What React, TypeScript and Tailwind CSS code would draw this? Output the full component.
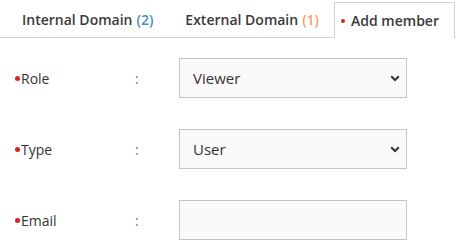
const rows = [
  { label: "Role", kind: "select", value: "Viewer" },
  { label: "Type", kind: "select", value: "User" },
  { label: "Email", kind: "input", value: "" },
];

const Chevron = () => (
  <svg width="10" height="7" viewBox="0 0 10 7" className="text-[#333]">
    <path d="M1.2 1.3 5 5 8.8 1.3" fill="none" stroke="currentColor" strokeWidth="2" />
  </svg>
);

export default function App() {
  return (
    <div className="w-[456px] h-[241px] bg-white overflow-hidden font-['Open_Sans',sans-serif] text-[#333]">
      <div className="flex items-end h-[38px] border-b border-[#d4d4d4] pl-[22px]">
        <div className="h-[36px] flex items-center text-[14px] font-semibold text-[#3a3a3a]">
          Internal Domain <span className="text-[#4a8cc4] ml-1">(2)</span>
        </div>
        <div className="h-[36px] flex items-center text-[14px] font-semibold text-[#3a3a3a] ml-[32px]">
          External Domain <span className="text-[#f59d6b] ml-1">(1)</span>
        </div>
        <div className="h-[36px] ml-[15px] -mb-px flex items-center gap-[6px] border border-b-0 border-[#d4d4d4] bg-white px-[6px] w-[121px] text-[14px] font-semibold text-[#3a3a3a]">
          <span className="w-[4px] h-[4px] rounded-full bg-[#e02020]" />
          Add member
        </div>
      </div>
      <div className="pt-[20px]">
        {rows.map((r, i) => (
          <div key={r.label} className={`flex items-center ${i > 0 ? "mt-[31px]" : ""}`}>
            <div className="w-[135px] pl-[15px] flex items-center text-[14px]">
              <span className="w-[5px] h-[5px] rounded-full bg-[#e02020] mr-px" />
              {r.label}
            </div>
            <div className="w-[44px] text-[14px] text-[#777]">:</div>
            <div className="w-[228px] h-[40px] border border-[#c4c4c4] bg-[#fafafa] flex items-center justify-between pl-[13px] pr-[6px] text-[15px]">
              <span>{r.value}</span>
              {r.kind === "select" && <Chevron />}
            </div>
          </div>
        ))}
      </div>
    </div>
  );
}
